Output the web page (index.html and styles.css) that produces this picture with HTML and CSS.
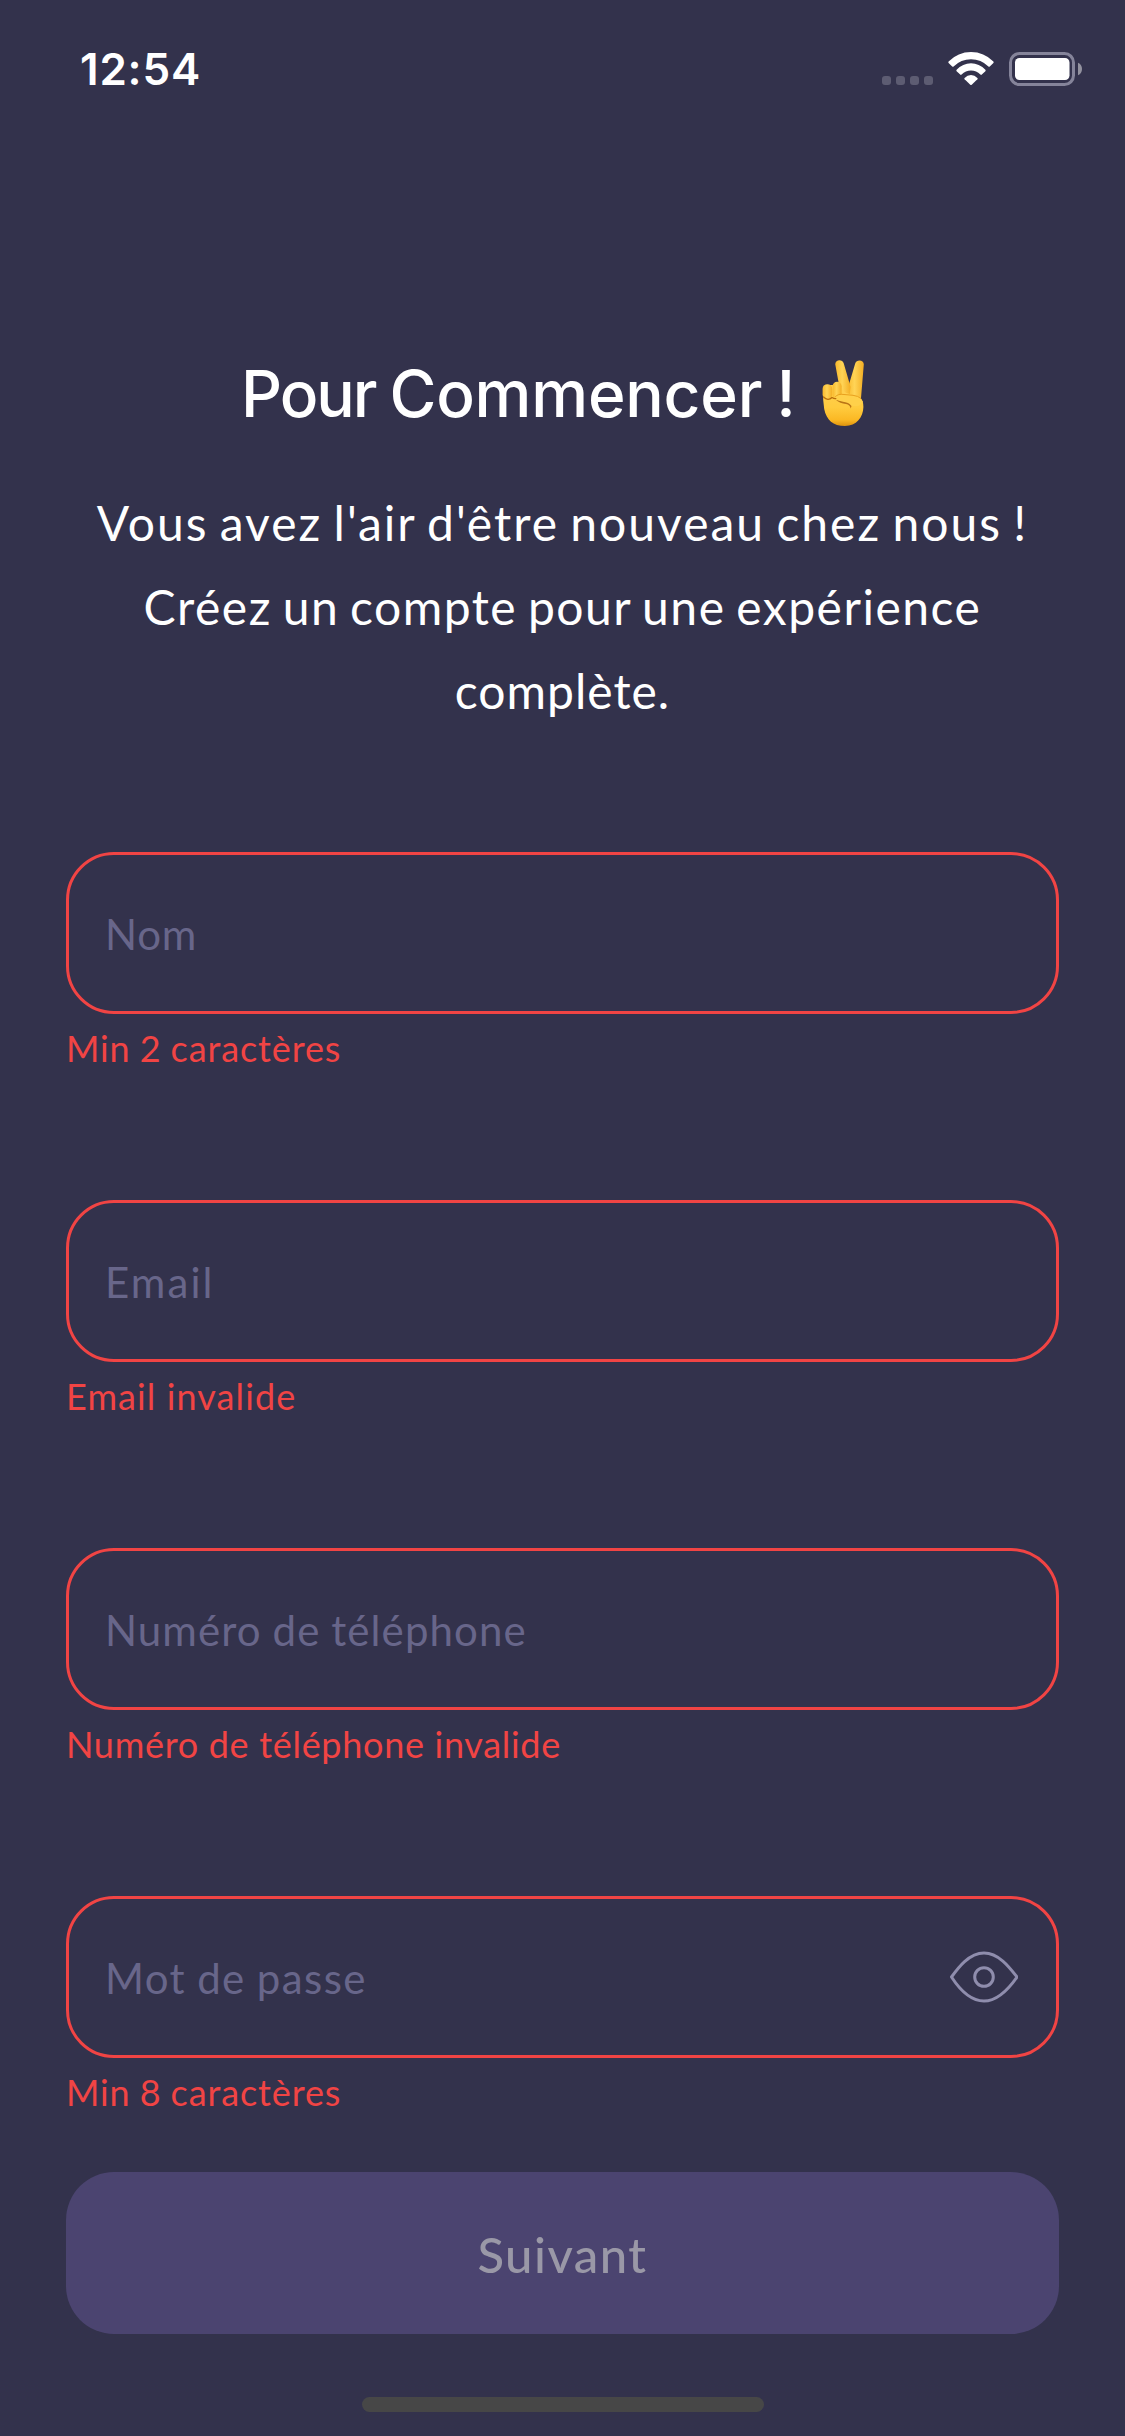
FILE: index.html
```html
<!DOCTYPE html>
<html lang="fr">
<head>
<meta charset="utf-8">
<title>Pour Commencer</title>
<link rel="stylesheet" href="styles.css">
</head>
<body>
<div class="screen">
  <header class="status">
    <span class="status-time">12:54</span>
    <div class="status-icons">
      <svg class="icon-dots" viewBox="0 0 51 9"><rect width="9" height="9" rx="3"/><rect x="14" width="9" height="9" rx="3"/><rect x="28" width="9" height="9" rx="3"/><rect x="42" width="9" height="9" rx="3"/></svg>
      <svg class="icon-wifi" viewBox="0 0 46 33">
        <path d="M0.6 9.5Q10 0 23 0T45.4 9.5Q46 10.2 45.4 10.9L41.8 14.4Q41.1 15 40.4 14.4Q33 7.2 23 7.2T5.6 14.4Q4.9 15 4.2 14.4L0.6 10.9Q0 10.2 0.6 9.5Z"/>
        <path d="M8.6 17.8Q14.8 11.3 23 11.3T37.4 17.8Q38 18.5 37.4 19.2L33.8 22.6Q33.1 23.2 32.4 22.6Q28.4 18.6 23 18.6T13.6 22.6Q12.9 23.2 12.2 22.6L8.6 19.2Q8 18.5 8.6 17.8Z"/>
        <path d="M16.6 25.9Q19.4 23 23 23T29.4 25.9Q30 26.6 29.4 27.2L23.7 32.7Q23 33.3 22.3 32.7L16.6 27.2Q16 26.6 16.6 25.9Z"/>
      </svg>
      <svg class="icon-battery" viewBox="0 0 74 34">
        <rect class="battery-shell" x="1.5" y="1.5" width="63" height="31" rx="9"/>
        <rect class="battery-level" x="6" y="6" width="54.5" height="22" rx="4.5"/>
        <path class="battery-cap" d="M69 10.8Q73 12.5 73 17T69 23.2Z"/>
      </svg>
    </div>
  </header>

  <main class="content">
    <h1 class="title">
      <span class="title-text"><span class="title-lead">Pour</span> Commencer !</span>
      <svg class="icon-victory" viewBox="0 0 42 66" role="img" aria-label="✌️">
        <defs>
          <linearGradient id="skin" x1="0" y1="0" x2="0" y2="1"><stop offset="0" stop-color="#ffd053"/><stop offset=".55" stop-color="#ffcb3e"/><stop offset=".85" stop-color="#fbb824"/><stop offset="1" stop-color="#dd920d"/></linearGradient>
          <linearGradient id="finger" x1="0" y1="0" x2="1" y2="0"><stop offset="0" stop-color="#f9b92c"/><stop offset=".45" stop-color="#ffd456"/><stop offset="1" stop-color="#f3ae24"/></linearGradient>
        </defs>
        <path fill="url(#finger)" d="M25 31L33.2 3.6C34.2-1 42.2-.6 41.8 4.6L39 38L25 41Z"/>
        <path fill="url(#finger)" d="M13.3 4.6C12.8-.6 20.4-1.4 21.7 3.3L28.6 27L27 40L19 36Z"/>
        <path fill="url(#skin)" d="M1 29Q1 25 5 25H19Q21 33 26 33.5L37.5 37Q41.6 41 41.4 47C41.2 57 34.5 66 23 66C11 66 4.5 60 2.2 49Q.8 40 1 29Z"/>
        <rect fill="url(#finger)" x="10.6" y="21.8" width="9" height="18" rx="4.5"/>
        <rect fill="url(#finger)" x=".6" y="24.2" width="9.6" height="15" rx="4.7"/>
        <path fill="none" stroke="#b86c0b" stroke-width="1.3" stroke-linecap="round" d="M1.5 37Q6 41.5 10 37.5Q14.5 40.5 17 36"/>
        <path fill="#a85e0b" opacity=".8" d="M14 40Q18 43.5 24 44Q28 44.5 28.7 48.5Q31 44.5 26.5 42Z"/>
        <path fill="#ffd04a" d="M13.5 36.5Q16 33.6 22 34.5L32 35.5Q39 36.5 41 42Q37 48 29 45.5Q27.5 42.8 20 41.6Q14 40.5 13.5 36.5Z"/>
        <path fill="none" stroke="#e59b18" stroke-width=".9" stroke-linecap="round" d="M13.5 36.5Q16 33.6 22 34.5L31 35.3Q36 35.8 39 38.5"/>
      </svg>
    </h1>

    <p class="intro">
      <span class="intro-line intro-first">Vous avez l'air d'être nouveau chez nous !</span>
      <span class="intro-line intro-second">Créez un compte pour une expérience</span>
      <span class="intro-line intro-third">complète.</span>
    </p>

    <form class="form">
      <div class="group">
        <div class="field"><span class="placeholder name">Nom</span></div>
        <span class="error min">Min 2 caractères</span>
      </div>
      <div class="group">
        <div class="field"><span class="placeholder email">Email</span></div>
        <span class="error email-error">Email invalide</span>
      </div>
      <div class="group">
        <div class="field"><span class="placeholder phone">Numéro de téléphone</span></div>
        <span class="error phone-error">Numéro de téléphone invalide</span>
      </div>
      <div class="group">
        <div class="field">
          <span class="placeholder password">Mot de passe</span>
          <svg class="icon-eye" viewBox="0 0 68 52"><path d="M1.5 26C8 17 19 2 34 2S60 17 67 26C60 36 49 50 34 50S8 36 1.5 26Z"/><circle cx="34" cy="26" r="9.3"/></svg>
        </div>
        <span class="error min">Min 8 caractères</span>
      </div>
    </form>
    <button class="next" type="button">Suivant</button>
  </main>
  <div class="home-bar"></div>
</div>
</body>
</html>
```
FILE: styles.css
```css
* { box-sizing: border-box; }
body { margin: 0; background: #33324c; }
svg { display: block; flex: none; }

.screen {
  width: 1125px;
  height: 2436px;
  display: flex;
  flex-direction: column;
  align-items: center;
  background: #33324c;
  color: #fff;
  font-family: Lato, "Open Sans", sans-serif;
  overflow: hidden;
}

.status {
  width: 100%;
  height: 138px;
  flex: none;
  padding: 0 42px 0 80px;
  display: flex;
  justify-content: space-between;
}
.status-time {
  padding-top: 42px;
  font: 600 44px/54px Inter, sans-serif;
  letter-spacing: 0.8px;
}
.status-icons { display: flex; padding-top: 52px; }
.icon-dots { width: 51px; height: 9px; margin: 24px 15px 0 0; fill: #5d5c72; }
.icon-wifi { width: 46px; height: 33px; margin-right: 15px; fill: #fff; }
.icon-battery { width: 74px; height: 34px; }
.battery-shell { fill: none; stroke: #85849a; stroke-width: 3; }
.battery-level { fill: #fff; }
.battery-cap { fill: #93929f; }

.content {
  width: 993px;
  height: 2196px;
  flex: none;
  display: flex;
  flex-direction: column;
}
.title {
  height: 120px;
  margin: 202px 0 0;
  padding-left: 175px;
  display: flex;
  align-items: flex-start;
  font: 500 64px/108px Inter, sans-serif;
}
.title-text { width: 575px; white-space: nowrap; word-spacing: -3px; letter-spacing: -0.2px; }
.title-lead { letter-spacing: -2px; }
.icon-victory { width: 42px; height: 66px; margin: 20px 0 0 6px; }

.intro {
  height: 252px;
  margin: 21px 0 0;
  text-align: center;
  font-size: 48px;
  line-height: 84px;
}
.intro-line { display: block; white-space: nowrap; }
.intro-first { letter-spacing: 2px; word-spacing: -3px; }
.intro-second { letter-spacing: 1.5px; word-spacing: -3px; }
.intro-third { letter-spacing: 1px; }

.form { display: flex; flex-direction: column; margin-top: 119px; }
.group { height: 348px; }
.group:last-child { height: 276px; }
.field {
  height: 162px;
  padding: 0 38px 0 36px;
  border: 3px solid #f14444;
  border-radius: 48px;
  display: flex;
  align-items: center;
  justify-content: space-between;
}
.placeholder { padding-top: 2px; font-size: 42px; line-height: 54px; color: #68668a; white-space: nowrap; }
.name { letter-spacing: 0.8px; }
.email { letter-spacing: 2.1px; }
.phone { letter-spacing: 1.1px; word-spacing: -1px; }
.password { letter-spacing: 1.4px; word-spacing: -1px; }
.error { display: block; padding-top: 10px; font-size: 36px; line-height: 48px; color: #f14444; white-space: nowrap; }
.min { letter-spacing: 0.9px; word-spacing: -1px; }
.email-error { letter-spacing: 1.1px; }
.phone-error { letter-spacing: 0.7px; }
.icon-eye { width: 68px; height: 52px; fill: none; stroke: #8f8dad; stroke-width: 3; stroke-linejoin: round; }

.next {
  width: 993px;
  height: 162px;
  flex: none;
  padding: 2px 0 0;
  border: 0;
  border-radius: 48px;
  background: #4b4470;
  color: #9a98a7;
  font: 500 49px/60px Lato, sans-serif;
  letter-spacing: 1.5px;
}
.home-bar {
  width: 402px;
  height: 15px;
  flex: none;
  margin-top: 63px;
  border-radius: 8px;
  background: #474747;
}
```
